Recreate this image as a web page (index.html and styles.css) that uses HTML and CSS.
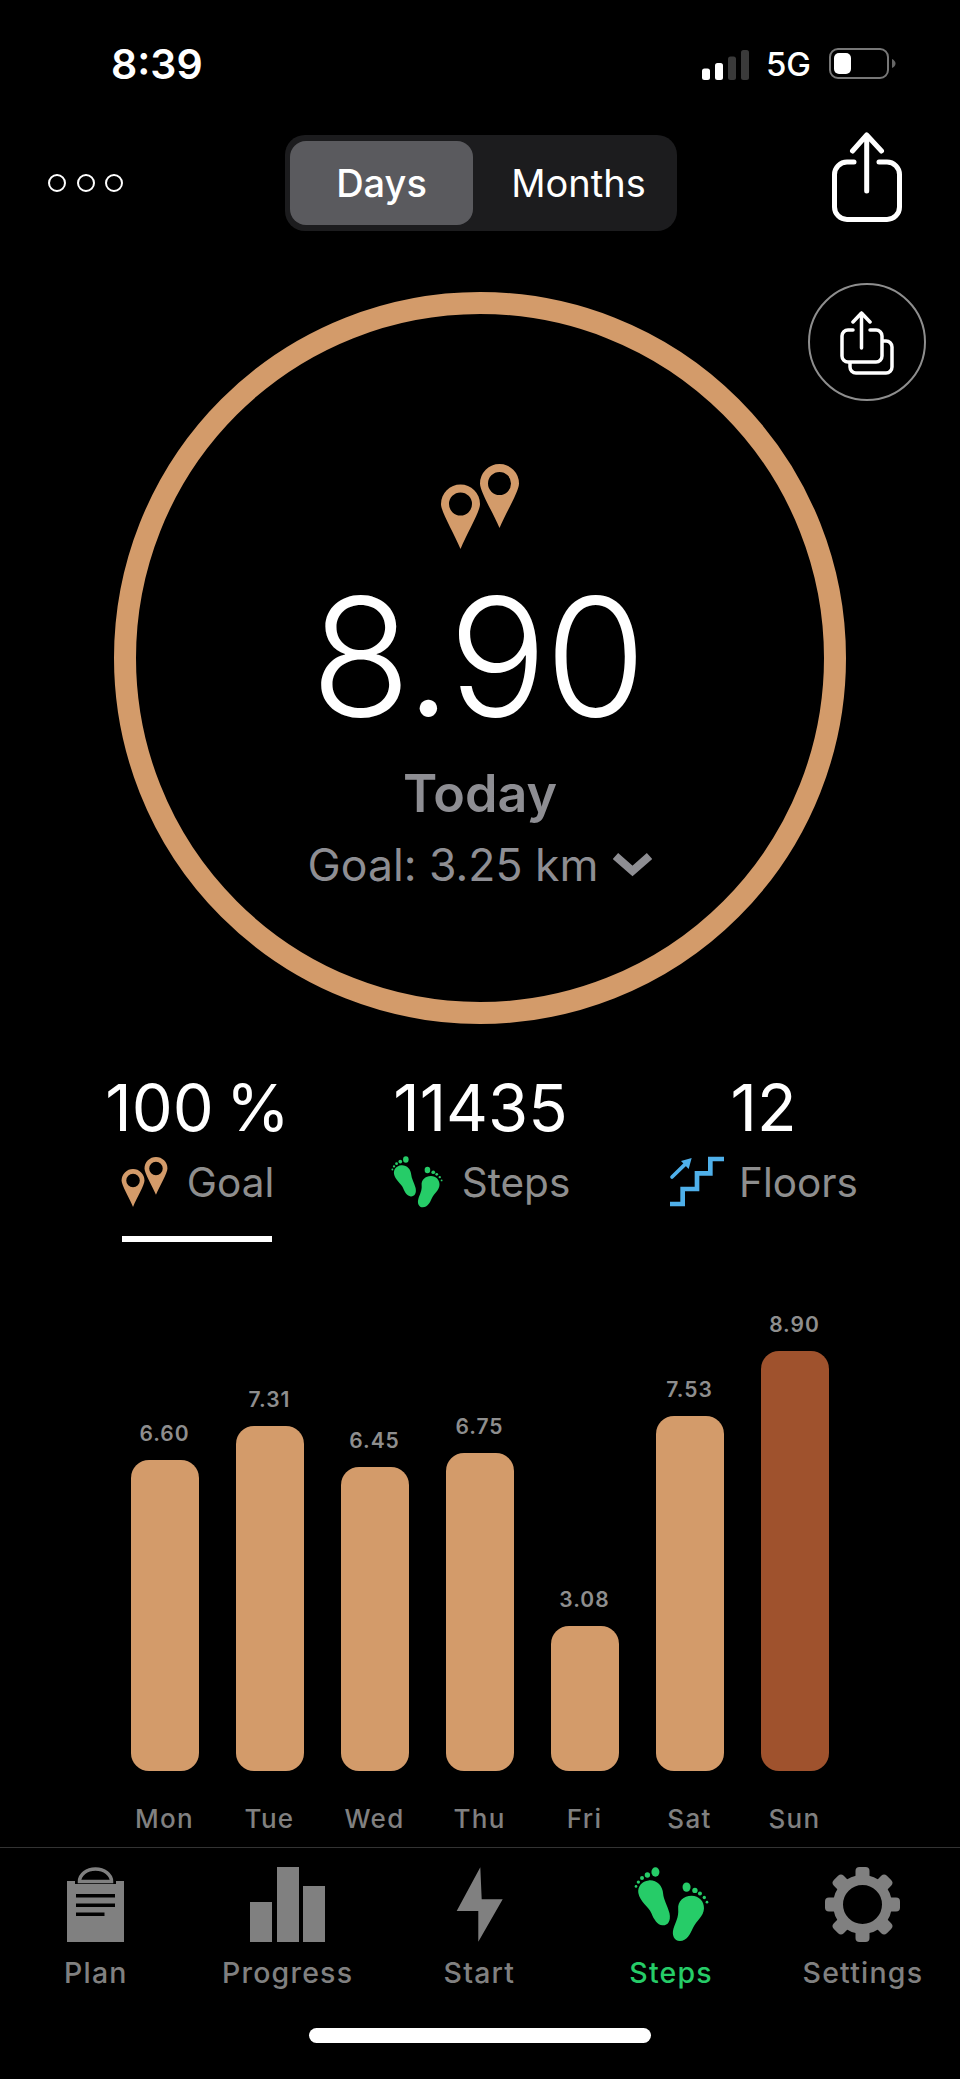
FILE: index.html
```html
<!DOCTYPE html>
<html lang="en">
<head>
  <meta charset="UTF-8">
  <title>Steps</title>
  <link rel="stylesheet" href="styles.css">
</head>
<body>
  <svg class="defs">
    <symbol id="pins" viewBox="0 0 78 85">
      <path fill-rule="evenodd" d="M58.5 0a19.5 19.5 0 0 1 19.5 19.5c0 8-13 29-19.5 44.500c-6.500-15.500-19.500-36.500-19.500-44.500a19.500 19.500 0 0 1 19.500-19.500zm0 8a11.500 11.500 0 1 0 0 23a11.500 11.500 0 0 0 0-23z"/>
      <path fill-rule="evenodd" d="M19.500 20.500a19.500 19.500 0 0 1 19.500 19.500c0 8-13 29-19.500 45c-6.500-16-19.500-37-19.500-45a19.500 19.500 0 0 1 19.500-19.500zm0 8a11.500 11.500 0 1 0 0 23a11.500 11.500 0 0 0 0-23z"/>
    </symbol>
    <symbol id="feet" viewBox="30 22 220 224">
      <path d="M72 62C95 60 114 78 115 102C116 118 128 138 134 160C139 185 128 197 113 196C98 195 87 178 80 160C72 142 45 125 41 100C38 80 52 64 72 62Z"/>
      <ellipse cx="92" cy="37" rx="12" ry="14"/>
      <circle cx="68" cy="46" r="8"/>
      <circle cx="52" cy="55" r="6"/>
      <circle cx="41" cy="67" r="5"/>
      <circle cx="34" cy="80" r="4"/>
      <path d="M200 108C222 108 238 125 237 146C236 170 214 183 204 204C196 222 186 243 165 243C148 243 140 226 146 206C152 186 162 172 160 148C158 125 176 108 200 108Z"/>
      <ellipse cx="185" cy="82" rx="12" ry="14"/>
      <circle cx="210" cy="92" r="8"/>
      <circle cx="225" cy="101" r="6"/>
      <circle cx="238" cy="113" r="5"/>
      <circle cx="246" cy="127" r="4"/>
    </symbol>
  </svg>

  <div class="page">
    <header class="status">
      <span class="time">8:39</span>
      <div class="status-right">
        <svg class="signal" width="47" height="31" viewBox="0 0 47 31">
          <rect x="0" y="19.500" width="8" height="11.500" rx="2.500" fill="#fff"/>
          <rect x="13" y="14" width="8" height="17" rx="2.500" fill="#fff"/>
          <rect x="26" y="7.500" width="8" height="23.500" rx="2.500" fill="#3a3a3a"/>
          <rect x="39" y="1" width="8" height="30" rx="2.500" fill="#3a3a3a"/>
        </svg>
        <span class="network">5G</span>
        <svg class="battery" width="67" height="32" viewBox="0 0 67 32">
          <rect x="1" y="1" width="58" height="29" rx="8" fill="none" stroke="#777" stroke-width="2"/>
          <rect x="5" y="5" width="17" height="21" rx="5" fill="#fff"/>
          <path d="M63 11c2 1 3.500 2.500 3.500 4.500s-1.500 3.500-3.500 4.500z" fill="#666"/>
        </svg>
      </div>
    </header>

    <div class="toolbar">
      <div class="dots"><i></i><i></i><i></i></div>
      <div class="segment">
        <span class="segment-item active">Days</span>
        <span class="segment-item">Months</span>
      </div>
      <svg class="share" width="74" height="92" viewBox="0 0 74 92" fill="none" stroke="#fff" stroke-width="5" stroke-linecap="round" stroke-linejoin="round">
        <path d="M24 30H17A12.500 12.500 0 0 0 4.500 42.500V75A12.500 12.500 0 0 0 17 87.500H57A12.500 12.500 0 0 0 69.500 75V42.500A12.500 12.500 0 0 0 57 30H49"/>
        <path d="M36.700 59V3M22.500 19L36.700 3L51.500 19"/>
      </svg>
    </div>

    <section class="ring-wrap">
      <div class="ring">
        <svg class="ring-pins"><use href="#pins"/></svg>
        <div class="ring-value">8.90</div>
        <div class="ring-day">Today</div>
        <div class="ring-goal">
          Goal: 3.25 km
          <svg class="chevron" width="39" height="24" viewBox="0 0 39 24" fill="none" stroke="#8e8e93" stroke-width="8"><path d="M2.500 3L19.500 18L36.500 3"/></svg>
        </div>
      </div>
      <button class="round-share">
        <svg width="60" height="68" viewBox="0 0 60 68" fill="none" stroke="#fff" stroke-width="3.500" stroke-linecap="round" stroke-linejoin="round">
          <path d="M13 19H8A6 6 0 0 0 2 25V45A6 6 0 0 0 8 51H36A6 6 0 0 0 42 45V25A6 6 0 0 0 36 19H30"/>
          <path d="M21.500 37V2M13 11L21.500 2L30 11"/>
          <path d="M10 52V56A6 6 0 0 0 16 62H46A6 6 0 0 0 52 56V36A6 6 0 0 0 46 30H43"/>
        </svg>
      </button>
    </section>

    <section class="stats">
      <div class="stat">
        <div class="stat-value">100 %</div>
        <div class="stat-label">
          <svg class="stat-icon pins-icon"><use href="#pins"/></svg>
          Goal
        </div>
        <div class="stat-bar"></div>
      </div>
      <div class="stat">
        <div class="stat-value">11435</div>
        <div class="stat-label">
          <svg class="stat-icon feet-icon"><use href="#feet"/></svg>
          Steps
        </div>
      </div>
      <div class="stat">
        <div class="stat-value">12</div>
        <div class="stat-label">
          <svg class="stat-icon stairs-icon" viewBox="24 21 165 156" fill="none" stroke="#4fb0ea" stroke-width="14">
            <path d="M27 165H65V120H108V73H148V30H189"/>
            <path d="M33 84L72 46" stroke-width="11" stroke-linecap="round"/>
            <path d="M92 27L60 36L83 60Z" fill="#4fb0ea" stroke="none"/>
          </svg>
          Floors
        </div>
      </div>
    </section>

    <section class="chart">
      <div class="col"><span class="col-value">6.60</span><div class="col-bar" style="height:311px"></div><span class="col-day">Mon</span></div>
      <div class="col"><span class="col-value">7.31</span><div class="col-bar" style="height:345px"></div><span class="col-day">Tue</span></div>
      <div class="col"><span class="col-value">6.45</span><div class="col-bar" style="height:304px"></div><span class="col-day">Wed</span></div>
      <div class="col"><span class="col-value">6.75</span><div class="col-bar" style="height:318px"></div><span class="col-day">Thu</span></div>
      <div class="col"><span class="col-value">3.08</span><div class="col-bar" style="height:145px"></div><span class="col-day">Fri</span></div>
      <div class="col"><span class="col-value">7.53</span><div class="col-bar" style="height:355px"></div><span class="col-day">Sat</span></div>
      <div class="col"><span class="col-value">8.90</span><div class="col-bar today" style="height:420px"></div><span class="col-day">Sun</span></div>
    </section>

    <nav class="tabs">
      <a class="tab">
        <svg width="57" height="75" viewBox="0 0 57 75">
          <path d="M0 14H8V17H49V14H57V75H0Z"/>
          <path d="M12.500 14.500A16 12.500 0 0 1 44.500 14.500Z" fill="none" stroke="#808080" stroke-width="3.500"/>
          <path d="M9 27H48V30.500H9ZM9 36.500H48V40H9ZM9 45.500H37.500V49H9Z" fill="#000"/>
        </svg>
        Plan
      </a>
      <a class="tab">
        <svg width="75" height="75" viewBox="0 0 75 75">
          <rect x="0" y="35" width="22" height="40"/>
          <rect x="27" y="0" width="22" height="75"/>
          <rect x="53" y="19" width="22" height="56"/>
        </svg>
        Progress
      </a>
      <a class="tab">
        <svg width="47" height="75" viewBox="0 0 47 75">
          <path d="M24.300 0.300L25.700 32.300H46.700L22.300 74.700V44H0.700Z"/>
        </svg>
        Start
      </a>
      <a class="tab active">
        <svg width="75" height="75"><use href="#feet"/></svg>
        Steps
      </a>
      <a class="tab">
        <svg width="75" height="75" viewBox="0 0 75 75">
          <circle cx="37.500" cy="37.500" r="24.500" fill="none" stroke="#808080" stroke-width="10"/>
          <rect x="30.500" y="0" width="14" height="16" rx="4"/>
          <rect x="30.500" y="0" width="14" height="16" rx="4" transform="rotate(45 37.500 37.500)"/>
          <rect x="30.500" y="0" width="14" height="16" rx="4" transform="rotate(90 37.500 37.500)"/>
          <rect x="30.500" y="0" width="14" height="16" rx="4" transform="rotate(135 37.500 37.500)"/>
          <rect x="30.500" y="0" width="14" height="16" rx="4" transform="rotate(180 37.500 37.500)"/>
          <rect x="30.500" y="0" width="14" height="16" rx="4" transform="rotate(225 37.500 37.500)"/>
          <rect x="30.500" y="0" width="14" height="16" rx="4" transform="rotate(270 37.500 37.500)"/>
          <rect x="30.500" y="0" width="14" height="16" rx="4" transform="rotate(315 37.500 37.500)"/>
        </svg>
        Settings
      </a>
    </nav>

    <div class="home-bar"></div>
  </div>
</body>
</html>
```

FILE: styles.css
```css
body {
  margin: 0;
  background-color: #000;
  color: #fff;
  font-family: "Inter", "Liberation Sans", sans-serif;
}

.defs {
  display: none;
}

.page {
  width: 960px;
  height: 2079px;
  overflow: hidden;
}

/* status bar */
.status {
  display: flex;
  justify-content: space-between;
  align-items: center;
  height: 40px;
  padding: 44px 64px 0 111px;
}

.time {
  font-size: 41px;
  font-weight: 600;
}

.status-right {
  display: flex;
  align-items: center;
}

.network {
  margin: 0 18px 0 17px;
  font-size: 33px;
  font-weight: 500;
}

/* top toolbar */
.toolbar {
  display: grid;
  grid-template-columns: 285px 392px 1fr;
  align-items: center;
  height: 96px;
  margin-top: 51px;
}

.dots {
  display: flex;
  gap: 10.500px;
  padding-left: 48px;
}

.dots i {
  width: 14px;
  height: 14px;
  border: 2.500px solid #fff;
  border-radius: 50%;
}

.segment {
  display: flex;
  align-items: center;
  height: 96px;
  padding: 0 5px;
  box-sizing: border-box;
  background-color: #1c1c1e;
  border-radius: 20px;
}

.segment-item {
  flex: 1;
  padding-left: 12px;
  font-size: 38px;
  line-height: 84px;
  text-align: center;
}

.segment-item.active {
  flex: 0 0 183px;
  padding-left: 0;
  background-color: #5a5a5e;
  border-radius: 16px;
  font-weight: 500;
}

.share {
  justify-self: end;
  margin: -10px 56px 0 0;
}

/* distance ring */
.ring-wrap {
  position: relative;
  margin-top: 61px;
}

.ring {
  display: flex;
  flex-direction: column;
  align-items: center;
  box-sizing: border-box;
  width: 732px;
  height: 732px;
  margin: 0 auto;
  padding-top: 150px;
  border: 22px solid #d39b6a;
  border-radius: 50%;
}

.ring-pins {
  width: 78px;
  height: 85px;
  margin-bottom: 13px;
  fill: #d39b6a;
}

.ring-value {
  height: 190px;
  padding-right: 5px;
  font-size: 164px;
  font-weight: 300;
  letter-spacing: -2px;
  line-height: 190px;
}

.ring-day {
  margin-top: 12px;
  color: #8e8e93;
  font-size: 52px;
  font-weight: 600;
  line-height: 60px;
}

.ring-goal {
  display: flex;
  align-items: center;
  gap: 15px;
  margin-top: 15px;
  color: #8e8e93;
  font-size: 44.500px;
  line-height: 52px;
}

.round-share {
  position: absolute;
  top: -9px;
  left: 808px;
  display: flex;
  align-items: center;
  justify-content: center;
  width: 118px;
  height: 118px;
  padding: 6px 0 0 6px;
  background: none;
  border: 2.500px solid #8e8e8e;
  border-radius: 50%;
}

/* stats under the ring */
.stats {
  display: grid;
  grid-template-columns: repeat(3, 283px);
  height: 200px;
  margin-top: 46px;
  padding-left: 56px;
}

.stat {
  display: flex;
  flex-direction: column;
  align-items: center;
}

.stat-value {
  font-size: 65px;
  font-weight: 400;
  line-height: 76px;
  word-spacing: -6px;
}

.stat-label {
  display: flex;
  align-items: center;
  gap: 19px;
  height: 52px;
  margin-top: 10px;
  color: #8e8e8e;
  font-size: 40.500px;
}

.stat-icon {
  width: 55px;
  height: 52px;
}

.pins-icon {
  width: 47px;
  height: 50px;
  fill: #d39b6a;
}

.feet-icon {
  width: 52px;
  height: 52px;
  fill: #26cc68;
}

.stairs-icon {
  margin-right: -4px;
}

.stat-bar {
  width: 150px;
  height: 6px;
  margin: 28px 2px 0 0;
  background-color: #fff;
}

/* bar chart */
.chart {
  display: flex;
  align-items: flex-end;
  height: 564px;
  padding-left: 112px;
}

.col {
  display: flex;
  flex-direction: column;
  align-items: center;
  width: 105px;
}

.col-value {
  margin-bottom: 14px;
  color: #8e8e8e;
  font-size: 21px;
  font-weight: 600;
  letter-spacing: 1px;
}

.col-bar {
  width: 68px;
  background-color: #d39b6a;
  border-radius: 18px;
}

.col-bar.today {
  background-color: #9f522d;
}

.col-day {
  margin-top: 33px;
  color: #808080;
  font-size: 26px;
  font-weight: 500;
  letter-spacing: 1.300px;
  line-height: 30px;
}

/* tab bar */
.tabs {
  display: grid;
  grid-template-columns: repeat(5, 191.750px);
  margin-top: 13px;
  padding-top: 19px;
  border-top: 1px solid #333;
}

.tab {
  display: flex;
  flex-direction: column;
  align-items: center;
  color: #808080;
  fill: #808080;
  font-size: 28.500px;
  font-weight: 500;
  letter-spacing: 1.200px;
  line-height: 34px;
}

.tab svg {
  margin-bottom: 14px;
}

.tab.active {
  color: #26cc68;
  fill: #26cc68;
}

.home-bar {
  width: 342px;
  height: 15px;
  margin: 38px auto 0;
  background-color: #fff;
  border-radius: 8px;
}
```
